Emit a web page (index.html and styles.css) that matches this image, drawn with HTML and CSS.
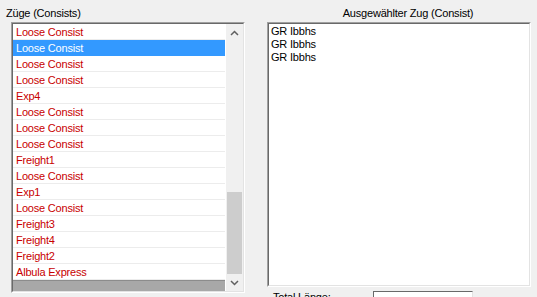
FILE: index.html
```html
<!DOCTYPE html>
<html lang="de">
<head>
  <meta charset="UTF-8">
  <title>Züge (Consists)</title>
  <link rel="stylesheet" href="styles.css">
</head>
<body>
  <div class="left-pane">
    <div class="caption">Züge (Consists)</div>
    <div class="listbox">
      <div class="listbox-inner">
        <div class="list">
          <div class="item">Loose Consist</div>
          <div class="item selected">Loose Consist</div>
          <div class="item">Loose Consist</div>
          <div class="item">Loose Consist</div>
          <div class="item">Exp4</div>
          <div class="item">Loose Consist</div>
          <div class="item">Loose Consist</div>
          <div class="item">Loose Consist</div>
          <div class="item">Freight1</div>
          <div class="item">Loose Consist</div>
          <div class="item">Exp1</div>
          <div class="item">Loose Consist</div>
          <div class="item">Freight3</div>
          <div class="item">Freight4</div>
          <div class="item">Freight2</div>
          <div class="item">Albula Express</div>
          <div class="list-rest"></div>
        </div>
        <div class="scrollbar">
          <div class="arrow">
            <svg width="9" height="6" viewBox="0 0 9 6"><path d="M1 5 L4.5 1.5 L8 5" fill="none" stroke="#606060" stroke-width="1.5"/></svg>
          </div>
          <div class="track">
            <div class="thumb"></div>
          </div>
          <div class="arrow">
            <svg width="9" height="6" viewBox="0 0 9 6"><path d="M1 1 L4.5 4.5 L8 1" fill="none" stroke="#606060" stroke-width="1.5"/></svg>
          </div>
        </div>
      </div>
    </div>
  </div>

  <div class="right-pane">
    <div class="caption centered">Ausgewählter Zug (Consist)</div>
    <div class="textbox">
      <div class="textbox-inner">
        <div>GR Ibbhs</div>
        <div>GR Ibbhs</div>
        <div>GR Ibbhs</div>
      </div>
    </div>
    <div class="total-row">
      <span class="total-label">Total Länge:</span>
      <div class="field"></div>
    </div>
  </div>
</body>
</html>
```

FILE: styles.css
```css
:root {
  --bg: #f0f0f0;
  --red: #c80000;
  --select: #3399ff;
  --dark: #696969;
  --mid: #a0a0a0;
  --light: #e3e3e3;
}

html, body {
  height: 100%;
}

body {
  margin: 0;
  background: var(--bg);
  font-family: "Liberation Sans", Arial, sans-serif;
  font-size: 11px;
  letter-spacing: -0.2px;
  color: #000;
  display: flex;
  align-items: flex-start;
  overflow: hidden;
}

.caption {
  line-height: 14px;
  padding-top: 6px;
  margin-bottom: 2px;
}

.caption.centered {
  text-align: center;
  padding-left: 18px;
}

/* left: list of consists */
.left-pane {
  margin-left: 6px;
  width: 239px;
}

.listbox {
  margin-left: 5px;
  width: 234px;
  height: 271px;
  box-sizing: border-box;
  border: 1px solid;
  border-color: var(--mid) #fff #fff var(--mid);
}

.listbox-inner {
  height: 100%;
  box-sizing: border-box;
  border: 1px solid;
  border-color: var(--dark) var(--light) var(--light) var(--dark);
  background: #fff;
  display: flex;
}

.list {
  flex: 1;
  display: flex;
  flex-direction: column;
}

.item {
  height: 16px;
  line-height: 16px;
  padding-left: 3px;
  color: var(--red);
  box-shadow: inset 0 -1px 0 #ececec;
  white-space: nowrap;
}

.item.selected {
  background: var(--select);
  color: #fff;
  box-shadow: none;
}

.list-rest {
  flex: 1;
  background: #a8a8a8;
  border-top: 1px solid #8c8c8c;
}

.scrollbar {
  width: 17px;
  background: var(--bg);
  display: flex;
  flex-direction: column;
  border-left: 1px solid #fff;
}

.arrow {
  height: 17px;
  display: flex;
  align-items: center;
  justify-content: center;
}

.track {
  flex: 1;
  display: flex;
  flex-direction: column;
  justify-content: flex-end;
}

.thumb {
  height: 82px;
  margin: 0 1px;
  background: #cdcdcd;
}

/* right: selected consist */
.right-pane {
  margin-left: 22px;
  width: 264px;
}

.textbox {
  height: 265px;
  box-sizing: border-box;
  border: 1px solid;
  border-color: var(--mid) #fff #fff var(--mid);
}

.textbox-inner {
  height: 100%;
  box-sizing: border-box;
  border: 1px solid;
  border-color: var(--dark) var(--light) var(--light) var(--dark);
  background: #fff;
  padding: 1px 2px;
  line-height: 13px;
}

.total-row {
  display: flex;
  align-items: flex-start;
  margin-top: 4px;
  padding-left: 6px;
}

.total-label {
  width: 100px;
  line-height: 12px;
}

.field {
  width: 100px;
  height: 20px;
  box-sizing: border-box;
  border: 1px solid;
  border-color: var(--dark) var(--light) var(--light) var(--dark);
  background: #fff;
}
```
